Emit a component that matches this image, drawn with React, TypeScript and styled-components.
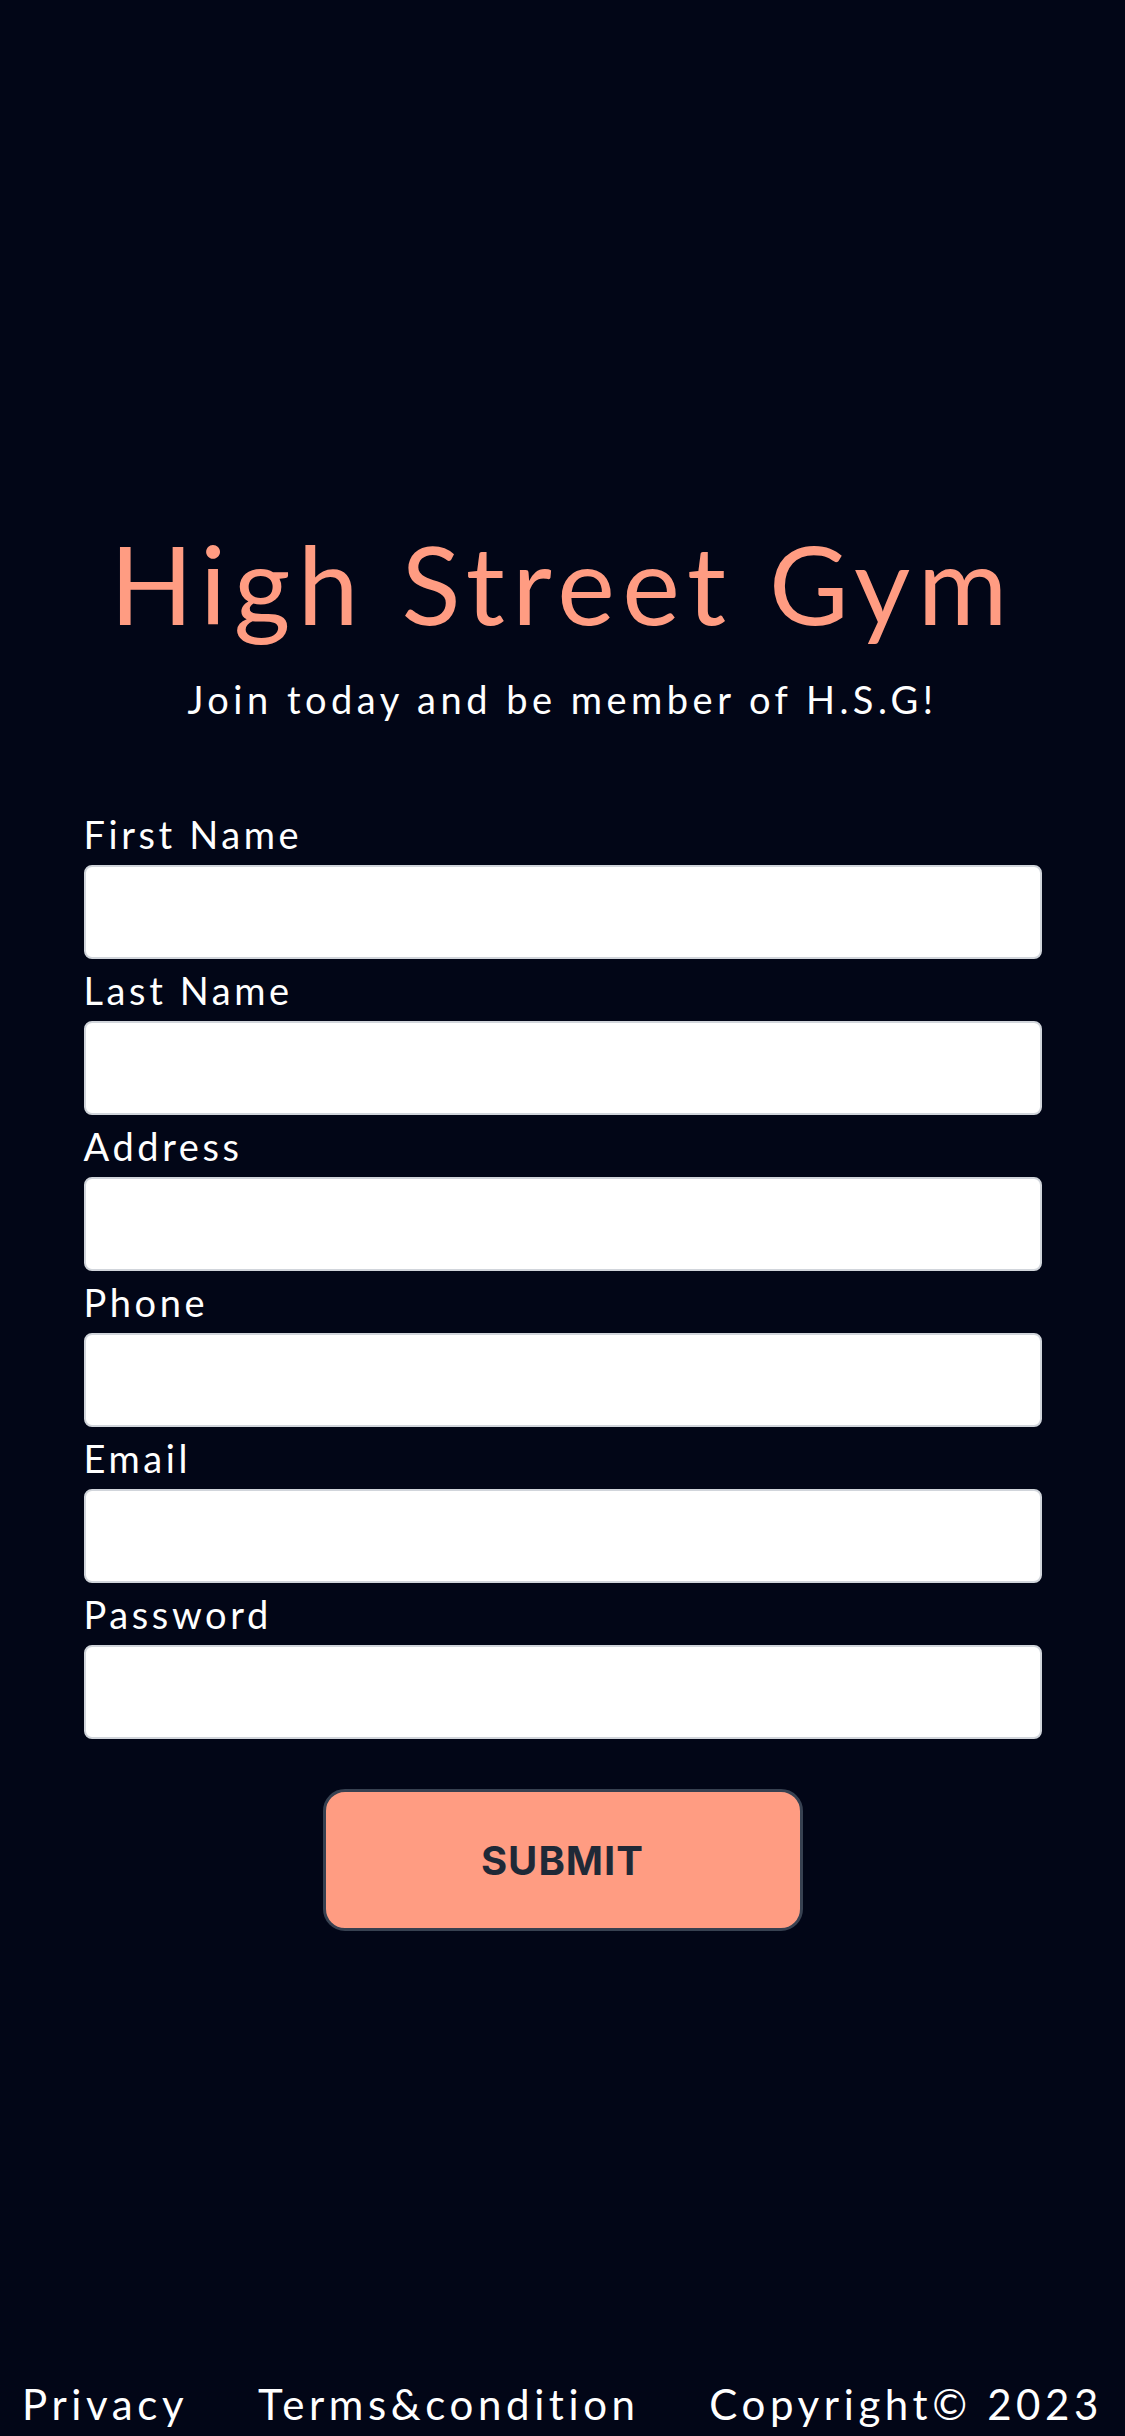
import styled, { createGlobalStyle } from 'styled-components'

const GlobalStyle = createGlobalStyle`
  html, body {
    margin: 0;
    padding: 0;
    background-color: #020617;
  }
  * {
    box-sizing: border-box;
  }
`

const Page = styled.div`
  min-height: 100vh;
  display: flex;
  flex-direction: column;
  background-color: #020617;
  color: #fff;
  font-family: Lato, 'Open Sans', sans-serif;
`

const Main = styled.main`
  flex: 1;
  display: flex;
  flex-direction: column;
  align-items: center;
  padding-top: 518px;
`

const Title = styled.h1`
  margin: 0;
  font-size: 109px;
  font-weight: 400;
  line-height: 1.2;
  letter-spacing: 7.5px;
  color: #ff9c82;
`

const Subtitle = styled.p`
  margin: 28px 0 0;
  font-size: 38px;
  line-height: 1.2;
  letter-spacing: 4.5px;
`

const Form = styled.form`
  width: 958px;
  margin-top: 81px;
  display: flex;
  flex-direction: column;
`

const Label = styled.label`
  font-size: 38px;
  line-height: 62px;
  letter-spacing: 3.6px;
`

const Input = styled.input`
  display: block;
  width: 100%;
  height: 94px;
  border: 2px solid #d1d5db;
  border-radius: 8px;
  background: #fff;
  outline: none;
  font-size: 36px;
`

const SubmitButton = styled.button`
  align-self: center;
  margin-top: 50px;
  width: 480px;
  height: 142px;
  background-color: #ff9c82;
  border: 3px solid #374151;
  border-radius: 22px;
  color: #1f2937;
  font-family: Inter, 'Liberation Sans', sans-serif;
  font-size: 40px;
  font-weight: 700;
  letter-spacing: 1px;
  cursor: pointer;
`

const Footer = styled.footer`
  display: flex;
  justify-content: space-between;
  padding: 0 22px 7px 22px;
  font-size: 42px;
  line-height: 1.2;
  letter-spacing: 4.6px;
`

const fields = ['First Name', 'Last Name', 'Address', 'Phone', 'Email', 'Password']

function App() {
  return (
    <>
      <GlobalStyle />
      <Page>
        <Main>
          <Title>High Street Gym</Title>
          <Subtitle>Join today and be member of H.S.G!</Subtitle>
          <Form onSubmit={(e) => e.preventDefault()}>
            {fields.map((f) => (
              <div key={f}>
                <Label htmlFor={f}>{f}</Label>
                <Input id={f} type={f === 'Password' ? 'password' : 'text'} />
              </div>
            ))}
            <SubmitButton type="submit">SUBMIT</SubmitButton>
          </Form>
        </Main>
        <Footer>
          <span>Privacy</span>
          <span>Terms&amp;condition</span>
          <span>Copyright© 2023</span>
        </Footer>
      </Page>
    </>
  )
}

export default App
